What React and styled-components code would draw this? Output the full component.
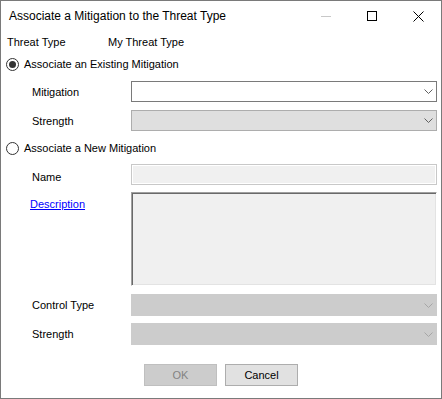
import styled, { createGlobalStyle } from 'styled-components';

const GlobalStyle = createGlobalStyle`
    html, body {
        margin: 0;
        padding: 0;
        background: #ffffff;
    }
    * {
        box-sizing: border-box;
    }
`;

const Window = styled.div`
    width: 442px;
    height: 399px;
    border: 1px solid #7a7a7a;
    background: #ffffff;
    display: flex;
    flex-direction: column;
    font-family: "Liberation Sans", Arial, sans-serif;
    font-size: 11px;
    color: #000;
`;

const TitleBar = styled.div`
    height: 30px;
    display: flex;
    align-items: center;
`;

const Title = styled.div`
    flex: 1;
    padding-left: 8px;
    font-size: 12px;
    color: #000;
`;

const CaptionButton = styled.div`
    width: 46px;
    height: 30px;
    display: flex;
    align-items: center;
    justify-content: center;
`;

const Body = styled.div`
    display: flex;
    flex-direction: column;
    padding-left: 5px;
`;

const Row = styled.div`
    margin-top: ${p => p.$top}px;
    height: ${p => p.$h || 14}px;
    display: flex;
    align-items: center;
`;

const InfoLabel = styled.span`
    width: ${p => p.$w}px;
    padding-left: ${p => p.$pad || 0}px;
`;

const Radio = styled.span`
    width: 13px;
    height: 13px;
    border-radius: 50%;
    border: 1px solid #333;
    background: #fff;
    display: inline-flex;
    align-items: center;
    justify-content: center;
    margin-right: 5px;

    &::after {
        content: '';
        width: 7px;
        height: 7px;
        border-radius: 50%;
        background: ${p => (p.$checked ? '#333' : 'transparent')};
    }
`;

const Field = styled.div`
    margin-top: ${p => p.$top}px;
    display: grid;
    grid-template-columns: 99px 306px;
    padding-left: 31px;
    align-items: ${p => (p.$alignTop ? 'start' : 'center')};
`;

const FieldLabel = styled.span`
    padding-top: ${p => p.$pt || 0}px;
    margin-left: ${p => p.$ml || 0}px;
`;

const Link = styled.a`
    color: #0000ff;
    text-decoration: underline;
    cursor: pointer;
`;

const combo = {
    enabled: { bg: '#ffffff', border: '#7a7a7a', arrow: '#606060' },
    locked: { bg: '#dfdfdf', border: '#adadad', arrow: '#606060' },
    disabled: { bg: '#cccccc', border: '#cccccc', arrow: '#a6a6a6' },
};

const Combo = styled.div`
    height: ${p => p.$h || 21}px;
    background: ${p => combo[p.$state].bg};
    border: 1px solid ${p => combo[p.$state].border};
    display: flex;
    align-items: center;
    justify-content: flex-end;
    padding-right: 3px;
`;

const TextBox = styled.div`
    height: 21px;
    background: #f0f0f0;
    border: 1px solid #c8c8c8;
    box-shadow: inset 0 0 0 1px #ffffff;
`;

const TextArea = styled.div`
    height: 94px;
    background: #f0f0f0;
    border: 1px solid;
    border-color: #a0a0a0 #ffffff #ffffff #a0a0a0;
    box-shadow: inset 1px 1px 0 #696969, inset -1px -1px 0 #e3e3e3;
`;

const Buttons = styled.div`
    margin-top: 19px;
    display: flex;
    gap: 8px;
    padding-left: 143px;
`;

const Button = styled.button`
    width: 73px;
    height: 22px;
    font-family: "Liberation Sans", Arial, sans-serif;
    font-size: 11px;
    padding: 0;
    background: ${p => (p.disabled ? '#cccccc' : '#e1e1e1')};
    border: 1px solid ${p => (p.disabled ? '#bfbfbf' : '#adadad')};
    color: ${p => (p.disabled ? '#838383' : '#000')};
`;

const Chevron = ({ color }) => (
    <svg width="9" height="5" viewBox="0 0 9 5">
        <path d="M0.5 0.5 L4.5 4.5 L8.5 0.5" fill="none" stroke={color} strokeWidth="1" />
    </svg>
);

const Dropdown = ({ state, h }) => (
    <Combo $state={state} $h={h}>
        <Chevron color={combo[state].arrow} />
    </Combo>
);

const App = () => {
    return (
        <>
            <GlobalStyle />
            <Window>
                <TitleBar>
                    <Title>Associate a Mitigation to the Threat Type</Title>
                    <CaptionButton>
                        <svg width="10" height="10" viewBox="0 0 10 10">
                            <path d="M0 5.5 H10" stroke="#c8c8c8" strokeWidth="1" />
                        </svg>
                    </CaptionButton>
                    <CaptionButton>
                        <svg width="10" height="10" viewBox="0 0 10 10">
                            <rect x="0.5" y="0.5" width="9" height="9" fill="none" stroke="#000" strokeWidth="1" />
                        </svg>
                    </CaptionButton>
                    <CaptionButton>
                        <svg width="11" height="11" viewBox="0 0 11 11">
                            <path d="M0.5 0.5 L10.5 10.5 M10.5 0.5 L0.5 10.5" stroke="#000" strokeWidth="1" />
                        </svg>
                    </CaptionButton>
                </TitleBar>
                <Body>
                    <Row $top={4}>
                        <InfoLabel $w={102} $pad={1}>Threat Type</InfoLabel>
                        <span>My Threat Type</span>
                    </Row>
                    <Row $top={8}>
                        <Radio $checked />
                        <span>Associate an Existing Mitigation</span>
                    </Row>
                </Body>
                <Field $top={10}>
                    <FieldLabel>Mitigation</FieldLabel>
                    <Dropdown state="enabled" />
                </Field>
                <Field $top={8}>
                    <FieldLabel>Strength</FieldLabel>
                    <Dropdown state="locked" />
                </Field>
                <Body>
                    <Row $top={10}>
                        <Radio />
                        <span>Associate a New Mitigation</span>
                    </Row>
                </Body>
                <Field $top={9}>
                    <FieldLabel $pt={4}>Name</FieldLabel>
                    <TextBox />
                </Field>
                <Field $top={7} $alignTop>
                    <FieldLabel $pt={6} $ml={-2}>
                        <Link>Description</Link>
                    </FieldLabel>
                    <TextArea />
                </Field>
                <Field $top={8}>
                    <FieldLabel>Control Type</FieldLabel>
                    <Dropdown state="disabled" h={22} />
                </Field>
                <Field $top={7}>
                    <FieldLabel>Strength</FieldLabel>
                    <Dropdown state="disabled" h={22} />
                </Field>
                <Buttons>
                    <Button disabled>OK</Button>
                    <Button>Cancel</Button>
                </Buttons>
            </Window>
        </>
    );
};

export default App;
